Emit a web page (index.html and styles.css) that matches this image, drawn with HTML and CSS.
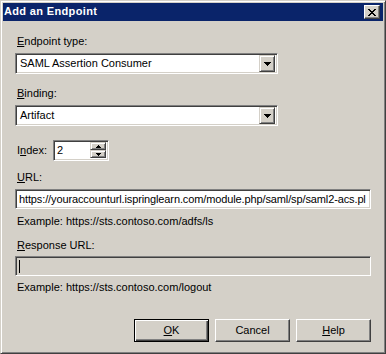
FILE: index.html
```html
<!DOCTYPE html>
<html>
<head>
<meta charset="utf-8">
<link rel="stylesheet" href="styles.css">
</head>
<body>
<div class="window">
  <div class="titlebar">
    <span class="title">Add an Endpoint</span>
    <span class="close">
      <svg width="8" height="7" viewBox="0 0 8 7" shape-rendering="crispEdges"><path d="M0 0h2v1h-2z M6 0h2v1h-2z M1 1h2v1h-2z M5 1h2v1h-2z M2 2h4v1h-4z M3 3h2v1h-2z M2 4h4v1h-4z M1 5h2v1h-2z M5 5h2v1h-2z M0 6h2v1h-2z M6 6h2v1h-2z" fill="#000"/></svg>
    </span>
  </div>
  <div class="content">
    <div class="label first"><u>E</u>ndpoint type:</div>
    <div class="combo">
      <span class="value">SAML Assertion Consumer</span>
      <span class="dropbtn"><svg width="7" height="4" viewBox="0 0 7 4" shape-rendering="crispEdges"><path d="M0 0h7v1h-7z M1 1h5v1h-5z M2 2h3v1h-3z M3 3h1v1h-1z" fill="#000"/></svg></span>
    </div>
    <div class="label gap-l"><u>B</u>inding:</div>
    <div class="combo">
      <span class="value">Artifact</span>
      <span class="dropbtn"><svg width="7" height="4" viewBox="0 0 7 4" shape-rendering="crispEdges"><path d="M0 0h7v1h-7z M1 1h5v1h-5z M2 2h3v1h-3z M3 3h1v1h-1z" fill="#000"/></svg></span>
    </div>
    <div class="index-row">
      <span class="label index-label">I<u>n</u>dex:</span>
      <div class="spin-edit">
        <span class="value">2</span>
        <span class="spinner">
          <span class="spinbtn"><svg width="5" height="3" viewBox="0 0 5 3" shape-rendering="crispEdges"><path d="M2 0h1v1h-1z M1 1h3v1h-3z M0 2h5v1h-5z" fill="#000"/></svg></span>
          <span class="spinbtn"><svg width="5" height="3" viewBox="0 0 5 3" shape-rendering="crispEdges"><path d="M0 0h5v1h-5z M1 1h3v1h-3z M2 2h1v1h-1z" fill="#000"/></svg></span>
        </span>
      </div>
    </div>
    <div class="label url-label"><u>U</u>RL:</div>
    <div class="edit"><span class="value url-value">https://youraccounturl.ispringlearn.com/module.php/saml/sp/saml2-acs.pl</span></div>
    <div class="text example">Example: https://sts.contoso.com/adfs/ls</div>
    <div class="label resp-label"><u>R</u>esponse URL:</div>
    <div class="edit disabled"><span class="caret"></span></div>
    <div class="text example2">Example: https://sts.contoso.com/logout</div>
    <div class="buttons">
      <span class="btn default"><span><u>O</u>K</span></span>
      <span class="btn">Cancel</span>
      <span class="btn"><span><u>H</u>elp</span></span>
    </div>
  </div>
</div>
</body>
</html>
```

FILE: styles.css
```css
html, body {
  margin: 0;
  padding: 0;
  background: #d4d0c8;
}

.window {
  width: 386px;
  height: 354px;
  box-sizing: border-box;
  border: 1px solid;
  border-color: #d4d0c8 #404040 #404040 #d4d0c8;
  box-shadow: inset 1px 1px #fff, inset -1px -1px #808080;
  padding: 2px;
  background: #d4d0c8;
  font: 11px "Liberation Sans", Arial, sans-serif;
  color: #000;
  display: flex;
  flex-direction: column;
}

.titlebar {
  height: 18px;
  flex: none;
  background: #0a246a;
  color: #fff;
  font-weight: bold;
  display: flex;
  align-items: center;
  justify-content: space-between;
  padding: 0 3px 0 1px;
}

.title {
  line-height: 13px;
  margin-top: -2px;
  letter-spacing: 0.35px;
}

.close {
  width: 16px;
  height: 14px;
  box-sizing: border-box;
  background: #d4d0c8;
  border: 1px solid;
  border-color: #fff #404040 #404040 #fff;
  box-shadow: inset -1px -1px #808080;
  display: flex;
  align-items: center;
  justify-content: center;
}

.close svg {
  display: block;
  margin-left: -1px;
}

.content {
  display: flex;
  flex-direction: column;
  padding: 14px 12px 0 12px;
}

.label, .text {
  height: 13px;
  line-height: 13px;
  padding-left: 2px;
  white-space: nowrap;
}

.label u, .btn u {
  text-decoration: underline;
  text-underline-offset: 1px;
}

.gap-l { margin-top: 13px; }

.combo {
  width: 263px;
  height: 21px;
  margin-top: 5px;
  box-sizing: border-box;
  background: #fff;
  border: 1px solid;
  border-color: #808080 #fff #fff #808080;
  box-shadow: inset 1px 1px #404040, inset -1px -1px #d4d0c8;
  padding: 1px 2px 1px 1px;
  display: flex;
  align-items: center;
}

.combo .value {
  flex: 1;
  padding-left: 3px;
  line-height: 13px;
}

.dropbtn {
  width: 16px;
  height: 17px;
  box-sizing: border-box;
  background: #d4d0c8;
  border: 1px solid;
  border-color: #d4d0c8 #404040 #404040 #d4d0c8;
  box-shadow: inset 1px 1px #fff, inset -1px -1px #808080;
  display: flex;
  align-items: center;
  justify-content: center;
}

.dropbtn svg {
  display: block;
  margin-top: 1px;
}

.index-row {
  margin-top: 14px;
  height: 21px;
  display: flex;
  align-items: center;
}

.index-label {
  width: 36px;
}

.spin-edit {
  width: 56px;
  height: 21px;
  box-sizing: border-box;
  background: #fff;
  border: 1px solid;
  border-color: #808080 #fff #fff #808080;
  box-shadow: inset 1px 1px #404040, inset -1px -1px #d4d0c8;
  padding: 1px 2px 2px 1px;
  display: flex;
  align-items: center;
}

.spin-edit .value {
  flex: 1;
  padding-left: 2px;
  line-height: 13px;
}

.spinner {
  width: 16px;
  align-self: stretch;
  display: flex;
  flex-direction: column;
}

.spinbtn {
  flex: 1;
  box-sizing: border-box;
  background: #d4d0c8;
  border: 1px solid;
  border-color: #d4d0c8 #404040 #404040 #d4d0c8;
  box-shadow: inset 1px 1px #fff, inset -1px -1px #808080;
  display: flex;
  align-items: center;
  justify-content: center;
}

.spinbtn svg { display: block; }

.url-label { margin-top: 10px; }

.edit {
  height: 20px;
  margin-top: 5px;
  box-sizing: border-box;
  background: #fff;
  border: 1px solid;
  border-color: #808080 #fff #fff #808080;
  box-shadow: inset 1px 1px #404040, inset -1px -1px #d4d0c8;
  padding: 1px 2px 1px 3px;
  display: flex;
  align-items: center;
  white-space: nowrap;
  overflow: hidden;
}

.edit .value {
  line-height: 13px;
}

.url-value {
  letter-spacing: -0.12px;
}

.edit.disabled {
  background: #d4d0c8;
  margin-top: 4px;
}

.caret {
  width: 1px;
  height: 13px;
  background: #000;
}

.example { margin-top: 6px; }

.resp-label { margin-top: 11px; }

.example2 { margin-top: 5px; }

.buttons {
  margin-top: 25px;
  display: flex;
  justify-content: flex-end;
  gap: 6px;
}

.btn {
  width: 75px;
  height: 23px;
  box-sizing: border-box;
  background: #d4d0c8;
  border: 1px solid;
  border-color: #fff #404040 #404040 #fff;
  box-shadow: inset -1px -1px #808080;
  display: flex;
  align-items: center;
  justify-content: center;
  line-height: 13px;
}

.btn.default {
  border-color: #000;
  box-shadow: inset 1px 1px #fff, inset -1px -1px #404040, inset -2px -2px #808080;
}
```
